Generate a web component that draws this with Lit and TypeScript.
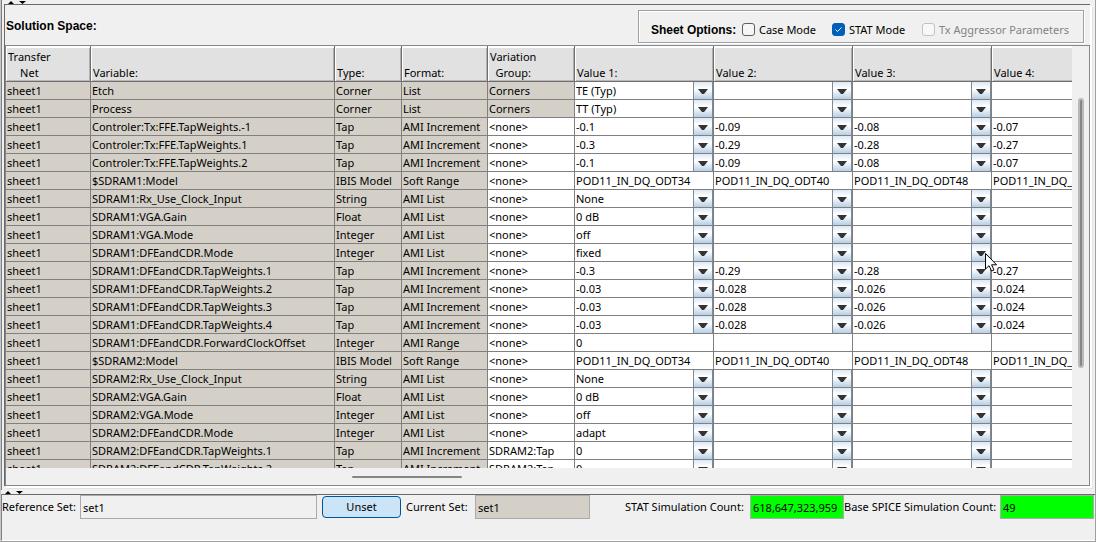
import { LitElement, html, css, nothing } from "lit";
import { customElement, property, state } from "lit/decorators.js";
import { classMap } from "lit/directives/class-map.js";

type Kind = "combo" | "text";

interface Row {
  variable: string;
  type: string;
  format: string;
  group: string;
  kind: Kind;
  values: string[];
}

const row = (
  variable: string,
  type: string,
  format: string,
  group: string,
  kind: Kind,
  ...values: string[]
): Row => ({ variable, type, format, group, kind, values });

const NONE = "<none>";
const POD = ["POD11_IN_DQ_ODT34", "POD11_IN_DQ_ODT40", "POD11_IN_DQ_ODT48", "POD11_IN_DQ_ODT60"];

const ROWS: Row[] = [
  row("Etch", "Corner", "List", "Corners", "combo", "TE (Typ)"),
  row("Process", "Corner", "List", "Corners", "combo", "TT (Typ)"),
  row("Controler:Tx:FFE.TapWeights.-1", "Tap", "AMI Increment", NONE, "combo", "-0.1", "-0.09", "-0.08", "-0.07"),
  row("Controler:Tx:FFE.TapWeights.1", "Tap", "AMI Increment", NONE, "combo", "-0.3", "-0.29", "-0.28", "-0.27"),
  row("Controler:Tx:FFE.TapWeights.2", "Tap", "AMI Increment", NONE, "combo", "-0.1", "-0.09", "-0.08", "-0.07"),
  row("$SDRAM1:Model", "IBIS Model", "Soft Range", NONE, "text", ...POD),
  row("SDRAM1:Rx_Use_Clock_Input", "String", "AMI List", NONE, "combo", "None"),
  row("SDRAM1:VGA.Gain", "Float", "AMI List", NONE, "combo", "0 dB"),
  row("SDRAM1:VGA.Mode", "Integer", "AMI List", NONE, "combo", "off"),
  row("SDRAM1:DFEandCDR.Mode", "Integer", "AMI List", NONE, "combo", "fixed"),
  row("SDRAM1:DFEandCDR.TapWeights.1", "Tap", "AMI Increment", NONE, "combo", "-0.3", "-0.29", "-0.28", "-0.27"),
  row("SDRAM1:DFEandCDR.TapWeights.2", "Tap", "AMI Increment", NONE, "combo", "-0.03", "-0.028", "-0.026", "-0.024"),
  row("SDRAM1:DFEandCDR.TapWeights.3", "Tap", "AMI Increment", NONE, "combo", "-0.03", "-0.028", "-0.026", "-0.024"),
  row("SDRAM1:DFEandCDR.TapWeights.4", "Tap", "AMI Increment", NONE, "combo", "-0.03", "-0.028", "-0.026", "-0.024"),
  row("SDRAM1:DFEandCDR.ForwardClockOffset", "Integer", "AMI Range", NONE, "text", "0"),
  row("$SDRAM2:Model", "IBIS Model", "Soft Range", NONE, "text", ...POD),
  row("SDRAM2:Rx_Use_Clock_Input", "String", "AMI List", NONE, "combo", "None"),
  row("SDRAM2:VGA.Gain", "Float", "AMI List", NONE, "combo", "0 dB"),
  row("SDRAM2:VGA.Mode", "Integer", "AMI List", NONE, "combo", "off"),
  row("SDRAM2:DFEandCDR.Mode", "Integer", "AMI List", NONE, "combo", "adapt"),
  row("SDRAM2:DFEandCDR.TapWeights.1", "Tap", "AMI Increment", "SDRAM2:Tap", "combo", "0"),
  row("SDRAM2:DFEandCDR.TapWeights.2", "Tap", "AMI Increment", "SDRAM2:Tap", "combo", "0"),
];

const CURSOR_ROW = 9;

/** Thin splitter bar with the two one-touch collapse arrows. */
@customElement("split-bar")
class SplitBar extends LitElement {
  static styles = css`
    :host {
      display: block;
      height: 4px;
      padding-left: 3px;
      background: #f0f0f0;
      overflow: hidden;
    }
    svg {
      display: block;
    }
  `;
  render() {
    return html`<svg width="30" height="4" viewBox="0 0 30 4" aria-hidden="true">
      <path d="M1 4 L4 1 L7 4Z M12 1 H19 L15.5 4Z" fill="#000" />
    </svg>`;
  }
}

/** Solution space grid. */
@customElement("solution-table")
class SolutionTable extends LitElement {
  @property({ attribute: false }) rows: Row[] = [];

  static styles = css`
    :host {
      display: block;
    }
    table {
      table-layout: fixed;
      width: 1125px;
      border-collapse: separate;
      border-spacing: 0;
    }
    .c-net { width: 85px; }
    .c-var { width: 244px; }
    .c-type { width: 67px; }
    .c-format { width: 86px; }
    .c-group { width: 87px; }
    .c-value { width: 139px; }
    th,
    td {
      box-sizing: border-box;
      padding: 0;
      font-weight: normal;
      text-align: left;
      white-space: nowrap;
      border-right: 1px solid #808080;
    }
    th {
      height: 36px;
      vertical-align: bottom;
      padding: 1px 0 0 2px;
      line-height: 16px;
      background: #e1e1e1;
      border-right-color: #6e6e6e;
      border-bottom: 1px solid #6e6e6e;
      box-shadow: inset 1px 2px 0 #fff, inset -1px 0 0 #b0b0b0, inset 0 -1px 0 #b8b8b8;
    }
    .stack {
      display: inline-block;
      text-align: center;
    }
    td {
      height: 18px;
      line-height: 17px;
      padding-left: 1px;
      border-bottom: 1px solid #808080;
      background: #fff;
    }
    .fixed {
      background: #d4d0c8;
    }
    .cell {
      position: relative;
      display: block;
      height: 17px;
    }
    select {
      appearance: none;
      display: block;
      box-sizing: border-box;
      width: 100%;
      height: 17px;
      margin: 0;
      padding: 0 20px 0 0;
      border: 0;
      border-right: 1px solid #7a8a99;
      border-radius: 0;
      outline: none;
      font: inherit;
      color: #000;
      background-color: #fff;
      background-image:
        url("data:image/svg+xml,%3Csvg xmlns='http://www.w3.org/2000/svg' width='10' height='5'%3E%3Cpath d='M0 0H10L6 5H4Z' fill='%23333'/%3E%3C/svg%3E"),
        linear-gradient(#7a8a99, #7a8a99),
        linear-gradient(#dde8f3, #fff 38%, #fff 42%, #b8cfe5);
      background-repeat: no-repeat;
      background-size: 10px 5px, 1px 100%, 19px 100%;
      background-position: right 4px top 7px, right 18px top, right top;
    }
    .cursor {
      position: absolute;
      right: -7px;
      top: 9px;
      z-index: 2;
      pointer-events: none;
    }
  `;

  private value(r: Row, rowIndex: number, i: number) {
    const v = r.values[i] ?? "";
    if (r.kind === "text") return html`<td>${v}</td>`;
    return html`<td>
      <span class="cell">
        <select aria-label="${r.variable} value ${i + 1}">
          <option selected>${v}</option>
        </select>
        ${rowIndex === CURSOR_ROW && i === 2
          ? html`<svg class="cursor" width="13" height="19" viewBox="0 0 13 19" aria-hidden="true">
              <path
                d="M.5 .5 V16 L4 12.7 L6.6 18 L9 17 L6.6 11.8 H11.6Z"
                fill="#fff"
                stroke="#000"
              />
            </svg>`
          : nothing}
      </span>
    </td>`;
  }

  render() {
    return html`<table>
      <colgroup>
        <col class="c-net" />
        <col class="c-var" />
        <col class="c-type" />
        <col class="c-format" />
        <col class="c-group" />
        ${[0, 1, 2, 3].map(() => html`<col class="c-value" />`)}
      </colgroup>
      <thead>
        <tr>
          <th><span class="stack">Transfer<br />Net</span></th>
          <th>Variable:</th>
          <th>Type:</th>
          <th>Format:</th>
          <th><span class="stack">Variation<br />Group:</span></th>
          ${[1, 2, 3, 4].map((n) => html`<th>Value ${n}:</th>`)}
        </tr>
      </thead>
      <tbody>
        ${this.rows.map(
          (r, ri) => html`<tr>
            <td class="fixed">sheet1</td>
            <td class="fixed">${r.variable}</td>
            <td class="fixed">${r.type}</td>
            <td class="fixed">${r.format}</td>
            <td class=${classMap({ fixed: r.group === "Corners" })}>${r.group}</td>
            ${[0, 1, 2, 3].map((i) => this.value(r, ri, i))}
          </tr>`
        )}
      </tbody>
    </table>`;
  }
}

@customElement("app-root")
class AppRoot extends LitElement {
  @state() private rows = ROWS;

  static styles = css`
    :host {
      display: flex;
      flex-direction: column;
      box-sizing: border-box;
      height: 100vh;
      overflow: hidden;
      background: #f0f0f0;
      color: #000;
      font-family: "Noto Sans", sans-serif;
      font-size: 11px;
      line-height: 16px;
      border-left: 1px solid #c4c8cc;
      border-right: 1px solid #a0a0a0;
      border-bottom: 1px solid #a0a0a0;
    }
    .upper {
      flex: 1;
      min-height: 0;
      display: flex;
      flex-direction: column;
      padding: 0 5px 4px 2px;
      border-left: 1px solid #808080;
    }
    .panel {
      flex: 1;
      min-height: 0;
      display: flex;
      flex-direction: column;
      border-top: 1px solid #696969;
      border-left: 1px solid #696969;
      box-shadow: 2px 2px 0 #fff, 3px 3px 0 #e3e3e3;
    }
    .bar {
      display: flex;
      justify-content: space-between;
      align-items: flex-start;
      padding: 5px 6px 2px 1px;
    }
    h1 {
      margin: 0;
      padding-top: 8px;
      font: bold 12px/16px "Liberation Sans", sans-serif;
    }
    fieldset {
      display: grid;
      grid-template-columns: 91px 90px 90px auto;
      align-items: center;
      box-sizing: border-box;
      height: 33px;
      margin: 0;
      padding: 6px 14px 0 12px;
      border: 1px solid #a0a0a0;
      box-shadow: 1px 1px 0 #fff, inset 1px 1px 0 #fff;
    }
    .legend {
      font: bold 12px/16px "Liberation Sans", sans-serif;
    }
    .option {
      display: flex;
      align-items: center;
      gap: 4px;
      white-space: nowrap;
    }
    .option input {
      appearance: none;
      box-sizing: border-box;
      width: 13px;
      height: 13px;
      margin: 0;
      border: 1px solid #5f5f5f;
      border-radius: 3px;
      background: #f6f6f6;
    }
    .option input:checked {
      border-color: #005fb8;
      background: #005fb8
        url("data:image/svg+xml,%3Csvg xmlns='http://www.w3.org/2000/svg' width='11' height='11'%3E%3Cpath d='M2.5 5.5L4.5 7.5L8.5 3.5' fill='none' stroke='%23fff'/%3E%3C/svg%3E")
        center no-repeat;
    }
    .option.off {
      color: #838383;
    }
    .option.off input {
      border-color: #c3c3c3;
      background: #f8f8f8;
    }
    .pane {
      flex: 1;
      min-height: 0;
      display: grid;
      grid-template-columns: minmax(0, 1fr) 17px;
      grid-template-rows: minmax(0, 1fr) 17px;
      border: 1px solid #828790;
    }
    .view {
      overflow: hidden;
      background: #fff;
    }
    .vbar {
      display: flex;
      justify-content: center;
      padding-top: 52px;
    }
    .vthumb {
      box-sizing: border-box;
      width: 6px;
      height: 73%;
      border: 2px solid #b9b9b9;
      border-radius: 3px;
      background: #858585;
    }
    .hbar {
      display: flex;
      align-items: center;
      padding-left: 346px;
    }
    .hthumb {
      width: 110px;
      height: 2px;
      border-radius: 1px;
      background: #858585;
    }
    .lower {
      display: flex;
      border-left: 1px solid #808080;
      border-top: 1px solid #696969;
      padding: 0 1px 21px 0;
      border-bottom: 1px solid #fff;
      white-space: nowrap;
    }
    .lower label {
      line-height: 24px;
    }
    .lower input {
      box-sizing: border-box;
      height: 24px;
      margin: 0;
      padding: 0 2px;
      border: 1px solid #ababab;
      border-radius: 0;
      outline: none;
      font: inherit;
      color: #000;
      background: #f0f0f0;
    }
    .l-ref { width: 78px; }
    .f-ref { width: 237px; }
    button {
      box-sizing: border-box;
      width: 79px;
      height: 22px;
      margin: 1px 5px 0;
      padding: 0;
      border: 1px solid #005499;
      border-radius: 4px;
      background: #cce4f7;
      font: inherit;
      color: #000;
    }
    .l-cur { width: 69px; }
    .lower .f-cur {
      width: 115px;
      background: #d4d0c8;
    }
    .counts {
      flex: 1;
      display: flex;
      justify-content: flex-end;
    }
    .lower .count {
      width: 94px;
      background: #0f0;
    }
    .l-stat { width: 125px; }
    .l-base { width: 156px; }
  `;

  render() {
    return html`
      <section class="upper">
        <split-bar></split-bar>
        <div class="panel">
          <div class="bar">
            <h1>Solution Space:</h1>
            <fieldset>
              <span class="legend">Sheet Options:</span>
              <label class="option"><input type="checkbox" />Case Mode</label>
              <label class="option"><input type="checkbox" checked />STAT Mode</label>
              <label class="option off"><input type="checkbox" disabled />Tx Aggressor Parameters</label>
            </fieldset>
          </div>
          <div class="pane">
            <div class="view"><solution-table .rows=${this.rows}></solution-table></div>
            <div class="vbar"><div class="vthumb"></div></div>
            <div class="hbar"><div class="hthumb"></div></div>
          </div>
        </div>
      </section>
      <split-bar></split-bar>
      <section class="lower">
        <label class="l-ref" for="ref">Reference Set:</label>
        <input class="f-ref" id="ref" type="text" value="set1" />
        <button type="button">Unset</button>
        <label class="l-cur" for="cur">Current Set:</label>
        <input class="f-cur" id="cur" type="text" value="set1" readonly />
        <div class="counts">
          <label class="l-stat" for="stat">STAT Simulation Count:</label>
          <input class="count" id="stat" type="text" value="618,647,323,959" readonly />
          <label class="l-base" for="base">Base SPICE Simulation Count:</label>
          <input class="count" id="base" type="text" value="49" readonly />
        </div>
      </section>
    `;
  }
}
